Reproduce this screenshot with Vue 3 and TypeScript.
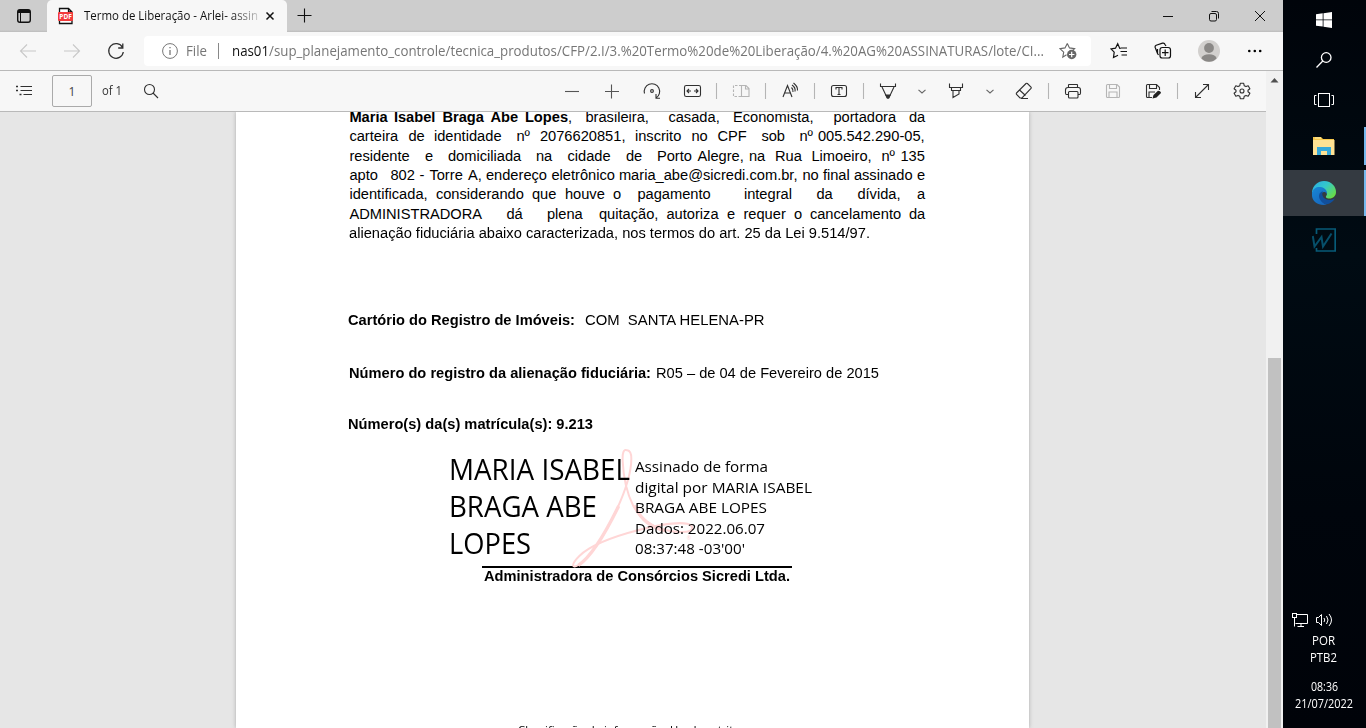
<script setup lang="ts">
interface Item { c: number; icon: string; cls?: string }
interface Word { t: string; w: number; b?: boolean }

// Stretches or condenses a run of text to the given width.
const vFit = {
  mounted(el: HTMLElement, binding: { value: number }) {
    const natural = el.getBoundingClientRect().width
    el.style.transform = `scaleX(${binding.value / natural})`
    el.style.marginRight = `${binding.value - natural}px`
  },
}

const icons: Record<string, string> = {
  list: '<path d="M-3.500 -4.500H8M-3.500 -.5H8M-0.500 3.500H8"/><path d="M-8 -4.500h2M-8 -.5h2M-4.500 3.500h2" stroke-width="1.6"/>',
  search: '<circle cx="-1.500" cy="-1.500" r="5"/><path d="M2 2L7 7"/>',
  minus: '<path d="M-7 .5H7" stroke="#555"/>',
  plus: '<path d="M-7 .5H7M-.5 -6.500V7.500" stroke="#555"/>',
  rotate: '<path d="M-7.500 2.500A7.700 7.700 0 1 1 4 7M4 3V7.300H8"/><circle r="1.400"/>',
  fit: '<rect x="-7.500" y="-5.500" width="16" height="11" rx="1.800"/><path d="M-5 0H-1M2 0H6M-3 -2L-5 0L-3 2M4 -2L6 0L4 2"/>',
  pages: '<path d="M0 5.500H-7.500V-5.500H0" stroke-dasharray="2.500 1.500"/><path d="M.5 -5.500H5L8 -2.500V5.500H.5ZM4.500 -5.500V-2H8"/>',
  read: '<path d="M-7 6L-2.500 -5.500L2 6M-5.500 2H.5M1.500 -3.500Q3.500 -1.500 3 1M2 -6Q5.800 -3.500 5 .5M3.500 -8Q8 -4.500 7.500 -.5"/>',
  text: '<rect x="-7.500" y="-5.500" width="15" height="11" rx="2"/><path d="M-3 -1.500V-3.500H3V-1.500M0 -3.500V3.500M-1.500 3.500H1.500"/>',
  pen: '<path d="M-7.500 -7.500V-4.500H7.500V-7.500M-6 -4L-.8 7H.8L6 -4"/><path d="M-2.200 4H2.200L.5 7H-.5Z" fill="#333"/>',
  chev: '<path d="M-3.500 -1.200L0 2L3.500 -1.200" stroke="#666"/>',
  marker: '<path d="M-6.500 -7.500V-3.500H6.500V-7.500M-4.500 -3.500V-.5H4.500V-3.500M-3 -.5V6.500L3 3V-.5"/>',
  eraser: '<path d="M-7.500 2L2 -7.500Q2.700 -8 3.400 -7.500L7 -4Q7.500 -3.300 7 -2.600L-2 7H-4L-7.200 3.700Q-8 3 -7.500 2ZM-4.500 -1L1.500 4.500M-3 7.500H4"/>',
  print: '<path d="M-4.500 3.500H-6.500Q-7.500 3.500 -7.500 2V-1Q-7.500 -3.500 -5 -3.500H5.500Q7.500 -3.500 7.500 -1V2Q7.500 3.500 6.500 3.500H5"/><rect x="-4.500" y="-6.500" width="9" height="3" rx=".5"/><rect x="-4.500" y=".5" width="9.500" height="6.500" rx="1"/>',
  save: '<path d="M-6.500 -5.500Q-6.500 -6.500 -5.500 -6.500H4L6.500 -4V5.500Q6.500 6.500 5.500 6.500H-5.500Q-6.500 6.500 -6.500 5.500ZM-3.500 -6.500V-2.500H3.500V-6.500M-4 6.500V1H4V6.500"/>',
  saveas: '<path d="M-1 6.500H-5.500Q-6.500 6.500 -6.500 5.500V-5.500Q-6.500 -6.500 -5.500 -6.500H3.500L6.500 -3.500V-1M-3.500 -6.500V-2.500H3.500V-6.500M-4 6.500V1H2"/><path d="M-.5 7.500L.5 4L5 -.3Q8 0 8 2L3.500 6.500Z" fill="#222" stroke="none"/>',
  expand: '<path d="M-6.500 6.500L6.500 -6.500M1 -6.500H6.500V-1M-6.500 1V6.500H-1"/>',
  gear: '<path stroke-linejoin="round" d="M-1.700 -7.700H1.700L2.200 -5.300L4 -4.400L6.200 -5.300L7.900 -2.300L6 -.8V.8L7.900 2.300L6.200 5.300L4 4.400L2.200 5.300L1.700 7.700H-1.700L-2.200 5.300L-4 4.400L-6.200 5.300L-7.900 2.300L-6 .8V-.8L-7.900 -2.300L-6.200 -5.300L-4 -4.400L-2.200 -5.300Z"/><circle r="2"/>',
  sep: '<path d="M.5 -8V8" stroke="#b5b5b5"/>',
  back: '<path d="M8 0H-7.500M-1 -6.500L-7.500 0L-1 6.500"/>',
  forward: '<path d="M-8 0H7.500M1 -6.500L7.500 0L1 6.500"/>',
  reload: '<path d="M6.500 -3.500A7.300 7.300 0 1 0 7.300 1M6.800 -7.500V-3H2.200" stroke-width="1.300"/>',
}

const tools: Item[] = [
  { c: 572, icon: 'minus' }, { c: 612, icon: 'plus' }, { c: 652, icon: 'rotate' },
  { c: 692, icon: 'fit' }, { c: 716, icon: 'sep' }, { c: 741, icon: 'pages', cls: 'dim' },
  { c: 765, icon: 'sep' }, { c: 790, icon: 'read' }, { c: 814, icon: 'sep' },
  { c: 839, icon: 'text' }, { c: 863, icon: 'sep' }, { c: 888, icon: 'pen' },
  { c: 922, icon: 'chev' }, { c: 956, icon: 'marker' }, { c: 990, icon: 'chev' },
  { c: 1024, icon: 'eraser' }, { c: 1048, icon: 'sep' }, { c: 1073, icon: 'print' },
  { c: 1113, icon: 'save', cls: 'dim' }, { c: 1153, icon: 'saveas' }, { c: 1177, icon: 'sep' },
  { c: 1202, icon: 'expand' }, { c: 1242, icon: 'gear' },
]
const gapBefore = (i: number) => tools[i].c - (i ? tools[i - 1].c : 151) - 20

// Each word is paired with its tab stop along the justified line.
function line(parts: (string | number)[]): Word[] {
  const out: Word[] = []
  for (let i = 0; i < parts.length; i += 2) {
    const next = (parts[i + 3] as number) ?? 926
    out.push({ t: String(parts[i]), w: next - (parts[i + 1] as number) })
  }
  return out
}
const lines: Word[][] = [
  line(['Maria', 349, 'Isabel', 393.5, 'Braga', 442, 'Abe', 490, 'Lopes', 524.5, ',', 567.5, 'brasileira,', 585, 'casada,', 668, 'Economista,', 732.5, 'portadora', 833, 'da', 908.5]),
  line(['carteira', 349, 'de', 408, 'identidade', 433.5, 'nº', 516, '2076620851,', 539.5, 'inscrito', 634.5, 'no', 691, 'CPF', 717, 'sob', 761, 'nº', 799, '005.542.290-05,', 817.5]),
  line(['residente', 349, 'e', 424.5, 'domiciliada', 447.5, 'na', 535.5, 'cidade', 567, 'de', 625.5, 'Porto', 656.5, 'Alegre,', 697, 'na', 748.5, 'Rua', 774.5, 'Limoeiro,', 811, 'nº', 881, '135', 900]),
  line(['apto', 349, '802', 390, '-', 419, 'Torre', 429, 'A,', 467.5, 'endereço', 485.5, 'eletrônico', 551, 'maria_abe@sicredi.com.br,', 618.5, 'no', 802, 'final', 822.5, 'assinado', 853.5, 'e', 916.5]),
  line(['identificada,', 349, 'considerando', 435.5, 'que', 531.5, 'houve', 564.5, 'o', 612.5, 'pagamento', 637, 'integral', 743.5, 'da', 816, 'dívida,', 857, 'a', 916.5]),
  line(['ADMINISTRADORA', 349, 'dá', 506, 'plena', 546.5, 'quitação,', 598.5, 'autoriza', 666, 'e', 726.5, 'requer', 743, 'o', 793.5, 'cancelamento', 809.5, 'da', 908.5]),
]
lines[0].forEach((w, i) => { w.b = i < 5 })
</script>

<template>
  <div class="screen">
    <div class="browser">
      <header class="tabstrip">
        <svg class="tabmenu" width="16" height="16" viewBox="0 0 16 16"><rect x="1.700" y="1.700" width="12.600" height="12.600" rx="2.200" fill="none" stroke="#111" stroke-width="1.400" /><path d="M2 2H14V5H2Z" fill="#111" /><path d="M4.500 5V14" stroke="#111" /></svg>
        <div class="tab">
          <svg width="16" height="18" viewBox="0 0 16 18"><path d="M1.500 5V1.500H10.500L14 5V16.500H1.500V13M10.500 1.500V5H14" fill="#fff" stroke="#111" stroke-width="1.300" /><rect y="5" width="15" height="9" rx="1" fill="#f23b3b" /><text x="1.300" y="12" class="pdf" textLength="12.500">PDF</text></svg>
          <div class="title"><span v-fit="174" class="fit">Termo de Liberação - Arlei- assin</span></div>
          <svg class="tabx" width="10" height="10" viewBox="0 0 10 10"><path d="M1.500 1.500L8.500 8.500M8.500 1.500L1.500 8.500" stroke="#111" stroke-width="1.500" /></svg>
        </div>
        <svg class="newtab" width="16" height="16" viewBox="0 0 16 16"><path d="M.5 7.500H14.500M7.500 .5V14.500" stroke="#111" stroke-width="1.100" /></svg>
        <div class="wincontrols">
          <svg width="12" height="12" viewBox="0 0 12 12"><path d="M1 6.500H11" stroke="#111" /></svg>
          <svg width="12" height="12" viewBox="0 0 12 12" fill="none" stroke="#111"><rect x="1.500" y="3.500" width="7" height="7.500" rx="1.500" /><path d="M3.500 1.500H8.500Q10.500 1.500 10.500 3.500V8.500" /></svg>
          <svg width="12" height="12" viewBox="0 0 12 12"><path d="M1 1L11 11M11 1L1 11" stroke="#111" /></svg>
        </div>
      </header>

      <nav class="navbar">
        <svg class="ic faint nb" viewBox="-10 -10 20 20" v-html="icons.back"></svg>
        <svg class="ic faint nf" viewBox="-10 -10 20 20" v-html="icons.forward"></svg>
        <svg class="ic nf" viewBox="-10 -10 20 20" v-html="icons.reload"></svg>
        <div class="address">
          <svg class="info" width="16" height="16" viewBox="0 0 16 16" fill="none" stroke="#777"><circle cx="8" cy="8" r="7.400" /><path d="M8 7V12M8 4V5.300" stroke-width="1.300" /></svg>
          <span class="file"><span v-fit="21" class="fit">File</span></span>
          <i class="bar"></i>
          <span class="url"><span v-fit="812" class="fit"><b>nas01</b>/sup_planejamento_controle/tecnica_produtos/CFP/2.I/3.%20Termo%20de%20Liberação/4.%20AG%20ASSINATURAS/lote/CI...</span></span>
          <svg class="addstar" width="18" height="18" viewBox="0 0 18 18" fill="none"><path d="M8.300 1.500L10.500 5.900L15.600 6.600L12.500 9.500M7.500 12.800L3.800 15.200L4.700 10.200L1 6.600L6 5.900L8.300 1.500" stroke="#666" stroke-width="1.100" /><circle cx="12.700" cy="12.500" r="4.700" fill="#666" /><path d="M10 12.500H15.400M12.700 9.800V15.200" stroke="#fff" stroke-width="1.200" /></svg>
        </div>
        <svg class="fav" width="18" height="18" viewBox="0 0 18 18" fill="none" stroke="#111" stroke-width="1.200"><path d="M10.500 6.500H9.800L7.700 1.700L5.500 6.200L1 6.900L4.200 10.200L3.500 15.500L8 13.200M10.500 6H17M10.500 9.500H17M11.500 13H17" /></svg>
        <svg class="coll" width="18" height="18" viewBox="0 0 18 18" fill="none" stroke="#111" stroke-width="1.200"><path d="M4.500 13L3.500 11.500L1.200 5.500Q.7 4 2.200 3.300L8.500 1.200Q10.500 .7 11 2.500L12 4M3.500 11.500V7" /><rect x="6" y="5.500" width="10.500" height="10.500" rx="2.300" /><path d="M8 10.700H14.500M11.200 7.500V14" /></svg>
        <svg class="avatar" width="22" height="22" viewBox="0 0 22 22"><circle cx="11" cy="11" r="11" fill="#d2d0ce" /><circle cx="11" cy="8" r="4.900" fill="#8a8886" /><path d="M3.300 18.200Q5 14.200 11 14.200T18.700 18.200Q15.500 21.800 11 21.800T3.300 18.200Z" fill="#8a8886" /></svg>
        <svg class="more" width="16" height="4" viewBox="0 0 16 4"><circle cx="2.300" cy="2" r="1.300" /><circle cx="7.800" cy="2" r="1.300" /><circle cx="13.200" cy="2" r="1.300" /></svg>
      </nav>

      <div class="content">
        <div class="viewer">
          <div class="toolbar">
            <svg class="ic toc" viewBox="-10 -10 20 20" v-html="icons.list"></svg>
            <div class="pageno">1</div>
            <span class="of"><span v-fit="20" class="fit">of 1</span></span>
            <svg class="ic find" viewBox="-10 -10 20 20" v-html="icons.search"></svg>
            <svg v-for="(t, i) in tools" :key="i" class="ic" :class="t.cls" :style="{ marginLeft: gapBefore(i) + 'px' }" viewBox="-10 -10 20 20" v-html="icons[t.icon]"></svg>
          </div>
          <main class="canvas">
            <article class="page">
              <div class="para">
                <div v-for="(l, i) in lines" :key="i" class="line">
                  <span v-for="(w, j) in l" :key="j" :class="{ bold: w.b }" :style="{ width: w.w + 'px' }">{{ w.t }}</span>
                </div>
                <div class="line"><span v-fit="521" class="fit">alienação fiduciária abaixo caracterizada, nos termos do art. 25 da Lei 9.514/97.</span></div>
              </div>
              <p class="field f1"><b v-fit="227" class="fit">Cartório do Registro de Imóveis:</b><span v-fit="179.500" class="fit value">COM&nbsp; SANTA HELENA-PR</span></p>
              <p class="field f2"><b v-fit="302" class="fit">Número do registro da alienação fiduciária:</b><span v-fit="223" class="fit after">R05 – de 04 de Fevereiro de 2015</span></p>
              <p class="field f3"><b v-fit="245" class="fit">Número(s) da(s) matrícula(s): 9.213</b></p>
              <section class="signature">
                <svg class="acrobat" width="130" height="124" viewBox="0 0 390 372" fill="none" stroke="#ffd6d6" stroke-linejoin="round">
                  <path d="M184 10C172 4 169 20 170 42C172 90 182 137 202 177C230 225 277 252 340 255C370 257 385 248 376 237C360 220 285 232 215 250C135 271 70 298 40 327C13 354 18 365 37 354C76 328 119 257 151 190C183 121 196 74 196 35C196 19 191 11 184 10Z" stroke-width="6" />
                  <path d="M158 177C119 257 78 328 37 355M205 175C225 220 257 243 298 251" stroke-width="10" />
                  <text x="362" y="279" class="reg">®</text>
                </svg>
                <div class="signer">
                  <div><span v-fit="181" class="fit">MARIA ISABEL</span></div>
                  <div><span v-fit="148" class="fit">BRAGA ABE</span></div>
                  <div><span v-fit="82" class="fit">LOPES</span></div>
                </div>
                <div class="details">
                  <div><span v-fit="133" class="fit">Assinado de forma</span></div>
                  <div><span v-fit="177" class="fit">digital por MARIA ISABEL</span></div>
                  <div><span v-fit="132" class="fit">BRAGA ABE LOPES</span></div>
                  <div><span v-fit="130" class="fit">Dados: 2022.06.07</span></div>
                  <div><span v-fit="110" class="fit">08:37:48 -03'00'</span></div>
                </div>
              </section>
              <div class="rule"></div>
              <div class="company"><b v-fit="306" class="fit">Administradora de Consórcios Sicredi Ltda.</b></div>
              <footer class="foot"><span v-fit="222" class="fit">Classificação da informação: Uso Irrestrito</span></footer>
            </article>
          </main>
        </div>
        <aside class="scroll">
          <svg width="9" height="5" viewBox="0 0 9 5"><path d="M4.500 0L8.500 4.500H.5Z" fill="#505050" /></svg>
          <div class="thumb"></div>
        </aside>
      </div>
    </div>

    <aside class="taskbar">
      <div class="task t40"><svg width="16" height="16" viewBox="0 0 16 16" fill="#fff"><path d="M0 2.300L6.700 1.300V7.500H0ZM7.500 1.200L16 0V7.500H7.500ZM0 8.300H6.700V14.600L0 13.700ZM7.500 8.300H16V16L7.500 14.800Z" /></svg></div>
      <div class="task t40"><svg width="16" height="16" viewBox="0 0 16 16" fill="none" stroke="#fff" stroke-width="1.300"><circle cx="10.200" cy="5.500" r="4.800" /><path d="M6.800 9L.5 15.500" /></svg></div>
      <div class="task t40"><svg width="20" height="14" viewBox="0 0 20 14" fill="none" stroke="#fff"><rect x="4.500" y=".5" width="11" height="13" /><path d="M2.500 2.500H.5V11.500H2.500M17.500 2.500H19.500V11.500H17.500" /></svg></div>
      <div class="task folder">
        <svg width="22" height="19" viewBox="0 0 22 19"><path d="M0 0H8L10 2H21V18H0Z" fill="#f6c84c" /><path d="M2 1H8" stroke="#fff0b3" /><path d="M0 3H21.500V18H0Z" fill="#ffe294" /><path d="M4 18V10H18V18H14V14H8V18Z" fill="#37a9da" /></svg>
      </div>
      <div class="task edge">
        <svg width="24" height="24" viewBox="0 0 24 24">
          <defs>
            <linearGradient id="g1" x1="0" y1="0" x2="1" y2=".7"><stop offset="0" stop-color="#2ba9e5" /><stop offset=".5" stop-color="#33c8cb" /><stop offset="1" stop-color="#68dc48" /></linearGradient>
            <linearGradient id="g2" x1="0" y1="0" x2=".7" y2="1"><stop offset="0" stop-color="#1788d7" /><stop offset="1" stop-color="#1767bd" /></linearGradient>
          </defs>
          <path d="M0 11C1 4 6 0 12 0C20 0 24 6 24 11C24 15 21 17.500 17.500 17.500C14 17.500 13.200 16 14.500 14.500C16 12.500 14 8.500 9 8C4 7.500 1 10 0 13Z" fill="url(#g1)" />
          <path d="M0 12C1 7 5 5.500 8.500 6C13 6.500 15.500 10 15 13C13 9.500 9 11 8.500 15C8 19 12 23 15 23.600C6 25.500 -1 20 0 12Z" fill="url(#g2)" />
          <path d="M11 10.200C7 11 6 15 8 18.500C10 22.500 14 24 17 22.800C20 21.500 22 19.500 22.700 17.600C19 20 12 19 10.700 15C10 13 10.300 11.500 11 10.200Z" fill="#114f9c" />
        </svg>
      </div>
      <div class="task wapp"><svg width="24" height="24" viewBox="0 0 24 24" fill="none"><path d="M4.500 6V1H23.200V23H4.500V20" stroke="#075b78" stroke-width="1.700" /><path d="M.8 8L2.500 18.500L9.500 9L11 18.500L19.500 5.500" stroke="#064f6a" stroke-width="2" /></svg></div>
      <div class="tray">
        <svg width="16" height="14" viewBox="0 0 16 14" fill="none" stroke="#fff"><path d="M5 1.500H15.500V10.500H3.500M9 10.500V13M5.500 13.500H12" /><rect x=".5" y=".5" width="4" height="4" /><path d="M2.500 4.500V13.500" /></svg>
        <svg width="17" height="14" viewBox="0 0 17 14" fill="none" stroke="#fff"><path d="M.5 4.500H2.500L5.500 1.500V12.500L2.500 9.500H.5ZM8 5Q9.500 7 8 9M10.500 3Q13.500 7 10.500 11M13 1Q18 7 13 13" /></svg>
      </div>
      <div class="t1"><span v-fit="23" class="fit">POR</span></div>
      <div class="t2"><span v-fit="27" class="fit">PTB2</span></div>
      <div class="t3"><span v-fit="27" class="fit">08:36</span></div>
      <div class="t4"><span v-fit="58" class="fit">21/07/2022</span></div>
    </aside>
  </div>
</template>

<style>
html, body { margin: 0; overflow: hidden; }
</style>

<style scoped>
.screen { display: flex; width: 1366px; height: 728px; overflow: hidden; font-family: "Open Sans", "Noto Sans", sans-serif; font-size: 12px; color: #111; }
.screen * { box-sizing: border-box; }
svg { display: block; flex: none; }
.fit { display: inline-block; white-space: nowrap; transform-origin: 0 50%; flex: none; }
.browser { width: 1283px; display: flex; flex-direction: column; background: #f7f7f7; flex: none; }
.tabstrip { height: 32px; display: flex; align-items: center; background: linear-gradient(#cdcdcd 0 30px, #bcbcbc 32px); flex: none; }
.tabmenu { margin-left: 16px; }
.tab { width: 240px; height: 32px; margin-left: 15px; background: #f7f7f7; border-radius: 5px 5px 0 0; display: flex; align-items: center; padding-left: 11px; }
.pdf { font: bold 6.5px "Open Sans", sans-serif; fill: #fff; stroke: none; }
.title { width: 174px; margin-left: 10px; height: 20px; line-height: 20px; font-size: 12px; -webkit-mask-image: linear-gradient(90deg, #000 84%, transparent 104%); mask-image: linear-gradient(90deg, #000 84%, transparent 104%); }
.tabx { margin-left: 7px; }
.newtab { margin-left: 10px; }
.wincontrols { margin-left: auto; margin-right: 17px; display: flex; gap: 34px; }
.navbar { height: 39px; display: flex; align-items: center; border-bottom: 1px solid #b9b9b9; flex: none; }
.ic { width: 20px; height: 20px; fill: none; stroke: #303030; stroke-width: 1.1; }
.dim { stroke: #b5b5b5; }
.faint { stroke: #c8c8c8; }
.nb { margin-left: 18px; }
.nf { margin-left: 24px; }
.address { width: 947px; height: 30px; margin-left: 18px; background: #fff; border-radius: 4px; display: flex; align-items: center; color: #767676; font-size: 14px; line-height: 28px; }
.info { margin-left: 18px; }
.file { width: 21px; margin-left: 8px; }
.bar { width: 1px; height: 16px; margin-left: 11px; background: #888; }
.url { width: 812px; margin-left: 13px; white-space: nowrap; }
.url b { font-weight: 400; color: #111; }
.addstar { margin-left: 15px; }
.fav { margin-left: 19px; }
.coll { margin-left: 26px; }
.avatar { margin-left: 26px; }
.more { margin-left: 27px; }
.content { display: flex; flex: 1; min-height: 0; }
.viewer { width: 1266px; display: flex; flex-direction: column; }
.toolbar { height: 41px; display: flex; align-items: center; border-bottom: 1px solid #b9b9b9; flex: none; }
.toc { margin-left: 14px; }
.pageno { width: 40px; height: 32px; margin-left: 18px; border: 1px solid #aaa; border-radius: 2px; text-align: center; line-height: 31px; font-size: 12px; color: #444; }
.of { width: 20px; margin-left: 10px; color: #333; line-height: 20px; }
.find { margin-left: 19px; }
.canvas { flex: 1; min-height: 0; background: #e6e6e6; overflow: hidden; display: flex; }
.page { width: 793px; height: 616px; margin-left: 236px; background: #fff; box-shadow: 0 0 4px #aaa; font: 14.67px/19.35px "Liberation Sans", Arial, sans-serif; color: #000; overflow: hidden; flex: none; }
.para { padding-left: 113.4px; margin-top: -4px; }
.line { display: flex; height: 19.35px; white-space: nowrap; }
.line > span { flex: none; }
.bold { font-weight: 700; }
.field { margin: 0; height: 20px; line-height: 20px; display: flex; }
.f1 { margin: 67px 0 0 112.3px; }
.f2 { margin: 33px 0 0 113.3px; }
.f3 { margin: 31px 0 0 112.3px; }
.value { margin-left: 9.7px; }
.after { margin-left: 4.7px; }
.signature { position: relative; display: flex; height: 117px; margin-top: 15px; padding-left: 212.5px; font-family: "Open Sans", "Noto Sans", sans-serif; }
.acrobat { position: absolute; left: 330px; top: -2px; }
.reg { font-size: 15px; fill: #ffd6d6; stroke: none; }
.signer { position: relative; width: 186.5px; font-size: 29px; line-height: 37px; padding-top: 1px; }
.details { position: relative; font-size: 15.3px; line-height: 20.5px; padding-top: 6.6px; }
.signer > div { height: 37px; }
.details > div { height: 20.5px; }
.rule { width: 310px; height: 2px; margin-left: 246px; background: #000; }
.company { margin: -2px 0 0 248px; height: 20px; line-height: 20px; }
.foot { margin: 136px 0 0 282px; height: 16px; font: 11.5px/16px "Open Sans", sans-serif; }
.scroll { width: 17px; background: #f1f1f1; display: flex; flex-direction: column; align-items: center; padding-top: 7px; }
.thumb { width: 13px; height: 370px; margin-top: 275px; background: #c1c1c1; flex: none; }
.taskbar { width: 83px; background: linear-gradient(#00040a, #000b13 35%, #00050c 70%, #000309); color: #fff; display: flex; flex-direction: column; flex: none; }
.task { display: flex; justify-content: center; align-items: center; flex: none; padding-right: 1px; }
.t40 { height: 40px; }
.folder { height: 38px; margin-top: 7px; border-right: 2px solid #76b9ed; padding-left: 1px; }
.edge { height: 46px; margin-top: 5px; background: #343a41; border-right: 2px solid #76b9ed; padding-left: 1px; }
.wapp { height: 48px; }
.tray { display: flex; gap: 8px; margin: 349px 0 0 9px; height: 14px; }
.t1, .t2, .t3, .t4 { height: 17px; line-height: 17px; font-size: 12px; text-align: left; flex: none; }
.t1 { margin: 5px 0 0 29px; }
.t2 { margin-left: 27px; }
.t3 { margin: 12px 0 0 28px; }
.t4 { margin-left: 12px; }
</style>
